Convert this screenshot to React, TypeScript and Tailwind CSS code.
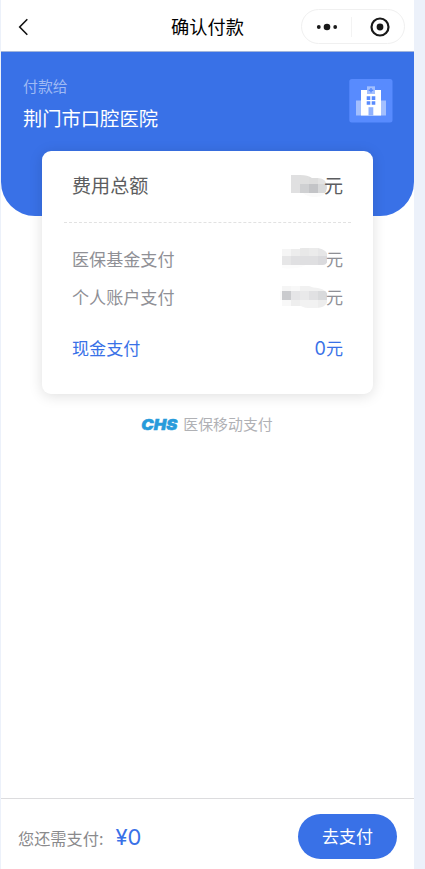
import React from 'react';

type Cell = [x: number, y: number, w: number, h: number, fill: string];

// every mask is drawn on a 48x24 canvas whose right edge touches the unit
const totalMask: Cell[] = [
  [11, 1, 9, 18, '#e0e0e1'],
  [20, 1, 9, 9, '#dfdfdf'],
  [29, 1, 9, 9, '#dddddd'],
  [38, 1, 9, 9, '#e3e3e3'],
  [20, 10, 9, 9, '#cfd0d2'],
  [29, 10, 9, 9, '#c3c4c7'],
  [38, 10, 9, 9, '#d8d9da'],
  [20, 19, 27, 4, '#fafafa'],
];

const fundMask: Cell[] = [
  [2, 2, 9, 7, '#f5f5f5'],
  [11, 2, 9, 7, '#ededed'],
  [20, 1, 9, 8, '#e8e8e8'],
  [29, 1, 9, 8, '#ebebeb'],
  [38, 1, 9, 8, '#e6e6e7'],
  [2, 9, 9, 9, '#e6e6e7'],
  [11, 9, 9, 9, '#e0e0e2'],
  [20, 9, 18, 9, '#dfdfe1'],
  [38, 9, 9, 9, '#dadadd'],
  [2, 18, 27, 4, '#fcfcfc'],
];

const accountMask: Cell[] = [
  [0, 6, 2, 9, '#fafafa'],
  [2, 1, 9, 5, '#f5f5f5'],
  [11, 1, 9, 5, '#f8f8f8'],
  [20, 1, 27, 5, '#f1f1f1'],
  [2, 6, 9, 9, '#cacbce'],
  [11, 6, 9, 9, '#e5e5e7'],
  [20, 6, 9, 9, '#e9e9ea'],
  [29, 6, 9, 9, '#e1e1e3'],
  [38, 6, 9, 9, '#d9dadc'],
  [2, 15, 9, 6, '#f8f8f8'],
  [11, 15, 9, 6, '#eeeeee'],
  [20, 15, 18, 8, '#f2f2f2'],
  [38, 15, 9, 8, '#ededed'],
];

const Mask: React.FC<{ id: string; cells: Cell[]; clip: string }> = ({
  id,
  cells,
  clip,
}) => (
  <svg width="48" height="24" viewBox="0 0 48 24" shapeRendering="crispEdges">
    <clipPath id={id}>
      <path d={clip} />
    </clipPath>
    <g clipPath={`url(#${id})`}>
      {cells.map(([x, y, w, h, fill]) => (
        <rect key={`${x}-${y}`} x={x} y={y} width={w} height={h} fill={fill} />
      ))}
    </g>
  </svg>
);

const HospitalIcon: React.FC = () => (
  <svg width="44" height="44" viewBox="0 0 44 44">
    <rect x="0.300" width="43.200" height="43.400" rx="2.500" fill="#588bfe" />
    <path d="M7 21.500h30v15H7z" fill="#a3bffe" />
    <path d="M12 11h20v25.500H12z" fill="#fff" />
    <path d="M18 7.300h8V15h-8z" fill="#a3bffe" />
    <path d="M22 9v4.600M19.700 11.300h4.600" stroke="#588bfe" strokeWidth="1.500" />
    <path
      d="M17.700 17.300h3.600v3.600h-3.600zM22.700 17.300h3.600v3.600h-3.600zM17.700 22.200h3.600v3.600h-3.600zM22.700 22.200h3.600v3.600h-3.600z"
      fill="#588bfe"
    />
    <path d="M19.500 28.200h4.800v8.300h-4.800z" fill="#8fb1fe" />
  </svg>
);

const App: React.FC = () => {
  return (
    <div className="flex h-[869px] w-[425px] overflow-hidden bg-[#ecf1fa] pl-px font-['Noto_Sans_CJK_SC','Noto_Sans',sans-serif]">
      <div className="flex w-[413px] flex-col bg-white">
        <header className="grid h-[52px] shrink-0 grid-cols-[1fr_auto_1fr] items-center border-b border-[#a3b5da] pt-[2px]">
          <svg
            className="ml-[17px]"
            width="12"
            height="18"
            viewBox="0 0 12 18"
            fill="none"
            stroke="#111"
            strokeWidth="1.6"
          >
            <path d="M9.300 1.200 1.700 9l7.600 7.800" />
          </svg>
          <h1 className="pb-[2px] text-[18.200px] leading-6 text-black">确认付款</h1>
          <div className="mr-[9px] flex h-[35px] w-[104px] items-center justify-self-end rounded-full border border-[#f0f0f0]">
            <div className="flex flex-1 items-center justify-center">
              <svg width="22" height="8" viewBox="0 0 22 8" fill="#191919">
                <circle cx="2.800" cy="4" r="1.900" />
                <circle cx="11" cy="4" r="3.300" />
                <circle cx="19.200" cy="4" r="1.900" />
              </svg>
            </div>
            <div className="h-5 w-px bg-[#f3f3f3]" />
            <div className="flex flex-1 items-center justify-center pl-[3px]">
              <svg width="20" height="20" viewBox="0 0 20 20">
                <circle cx="10" cy="10" r="8.500" fill="none" stroke="#191919" strokeWidth="2.200" />
                <circle cx="10" cy="10" r="3.400" fill="#191919" />
              </svg>
            </div>
          </div>
        </header>

        <section className="flex h-[164px] shrink-0 items-start justify-between rounded-b-[34px] bg-[#3971e7] pr-[21px] pl-[22px]">
          <div className="pt-[22px]">
            <p className="text-[14.900px] leading-6 text-[#9fbaf4]">付款给</p>
            <p className="mt-[4px] text-[19.300px] leading-8 text-white">
              荆门市口腔医院
            </p>
          </div>
          <div className="pt-[27px]">
            <HospitalIcon />
          </div>
        </section>

        <main className="mx-[41px] -mt-[65px] h-[243px] shrink-0 rounded-[9px] bg-white px-[22px] shadow-[0_2px_14px_rgba(0,0,0,0.13)]">
          <div className="flex h-[72px] items-center justify-between border-b border-dashed border-[#e2e2e2] px-2 pb-[2px] text-[19.100px] text-[#5c5d60]">
            <span>费用总额</span>
            <span className="flex items-center">
              <Mask
                id="total"
                cells={totalMask}
                clip="M11 1h9q8 0 12 3h6q9 0 9 10-1 9-12 9-8 0-12-4H11z"
              />
              <span className="-ml-[4px] pb-px leading-7">元</span>
            </span>
          </div>
          <div className="px-2 pt-[17px] text-[17.100px] text-[#8f9096]">
            <div className="flex h-[38px] items-center justify-between">
              <span>医保基金支付</span>
              <span className="flex items-center">
                <Mask
                  id="fund"
                  cells={fundMask}
                  clip="M2 2h13q4-1 8-1h15q10 2 10 9 0 8-5 8H26q-10 5-24 3z"
                />
                <span className="-ml-[2px]">元</span>
              </span>
            </div>
            <div className="flex h-[38px] items-center justify-between">
              <span>个人账户支付</span>
              <span className="flex items-center">
                <Mask
                  id="account"
                  cells={accountMask}
                  clip="M0 1h29q4 2 9 2 10 2 10 9 0 11-12 11-10 1-15-2H0z"
                />
                <span className="-ml-[2px]">元</span>
              </span>
            </div>
            <div className="mt-[13px] flex h-[38px] items-center justify-between text-[#3971e7]">
              <span>现金支付</span>
              <span>
                <span className="font-['Inter',sans-serif] text-[18px] leading-6">
                  0
                </span>
                元
              </span>
            </div>
          </div>
        </main>

        <div className="mt-[18px] flex items-center justify-center gap-[5px] pr-[2px]">
          <svg
            className="overflow-visible"
            width="38"
            height="18"
            viewBox="0 0 38 18"
          >
            <text
              x="1.300"
              y="14.800"
              textLength="36"
              lengthAdjust="spacingAndGlyphs"
              className="fill-[#279bdb] stroke-[#279bdb] font-['Inter',sans-serif] text-[15px] font-black italic"
              strokeWidth="0.500"
            >
              CHS
            </text>
          </svg>
          <span className="text-[14.900px] leading-6 text-[#b0b1b5]">
            医保移动支付
          </span>
        </div>

        <footer className="mt-auto flex h-[71px] shrink-0 items-center justify-between border-t border-[#dcdcde] pr-[17px] pl-[17px]">
          <div className="flex items-baseline gap-[12px] pt-[6px]">
            <span className="text-[16.200px] text-[#8a8a8c]">您还需支付:</span>
            <span className="font-['Inter',sans-serif] text-[22px] text-[#3971e7]">
              ¥0
            </span>
          </div>
          <button className="mt-[5px] mb-px h-[45px] w-[99px] rounded-full bg-[#3971e7] text-[17px] text-white">
            去支付
          </button>
        </footer>
      </div>
    </div>
  );
};

export default App;
